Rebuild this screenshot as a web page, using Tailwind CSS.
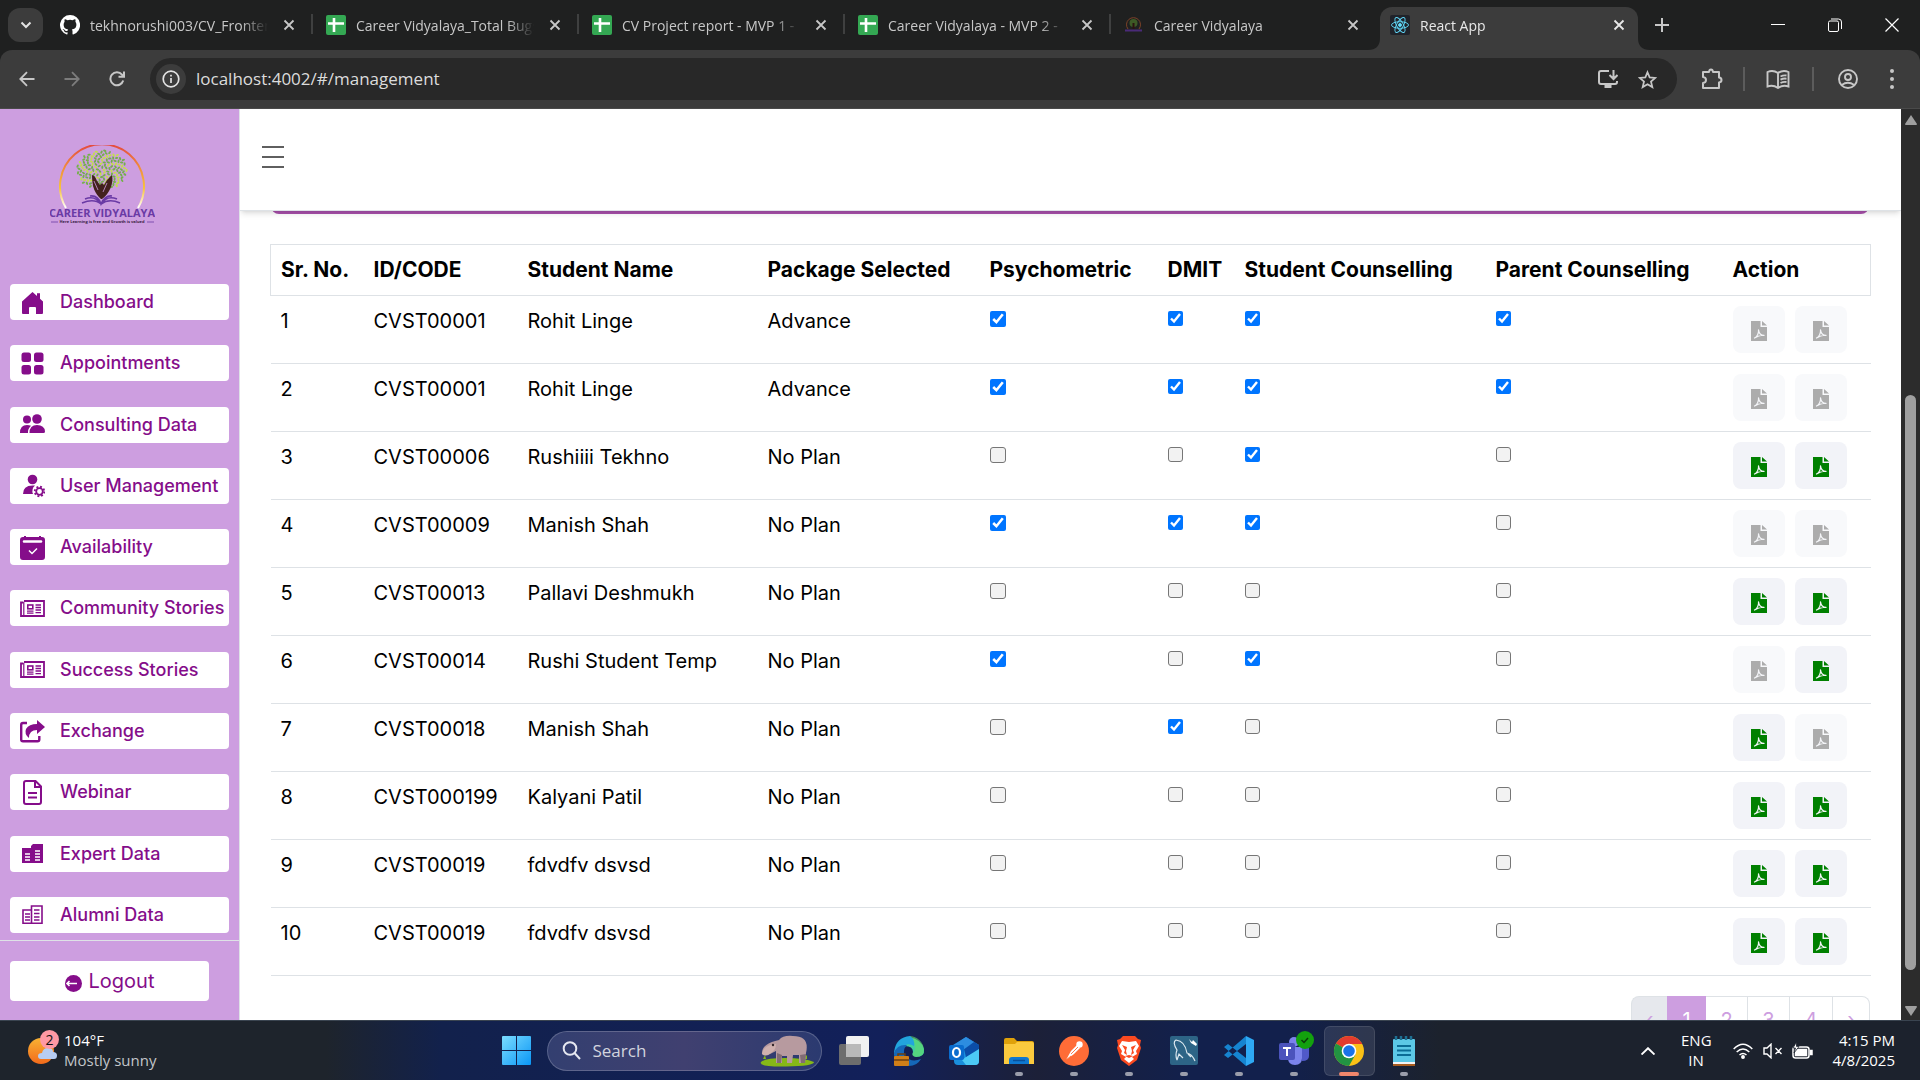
<!DOCTYPE html>
<html lang="en">
<head>
<meta charset="utf-8">
<meta name="viewport" content="width=device-width, initial-scale=1">
<title>React App</title>
<script src="https://cdn.jsdelivr.net/npm/@tailwindcss/browser@4"></script>
</head>
<body class="h-screen overflow-hidden bg-[#202020] font-['Inter',sans-serif]">

<!-- Shared icon shapes -->
<svg class="hidden" aria-hidden="true">
  <symbol id="x" viewBox="0 0 12 12"><path d="M1.500 1.500l9 9M10.500 1.500l-9 9" stroke="currentColor" stroke-width="1.800" fill="none"/></symbol>
  <symbol id="sheet" viewBox="0 0 20 20"><rect width="20" height="20" rx="2" fill="#34a853"/><path d="M8 3v14M2 8.500h16" stroke="#fff" stroke-width="2.600"/></symbol>
  <symbol id="pdf" viewBox="0 0 16 20"><path fill="currentColor" d="M0 0h9.500v6H16v14H0zM11 0l5 4.500h-5z"/><path d="M3.500 17c2.500-1.200 4.500-5 4-8.200 .5 3.600 2.500 5.600 5.500 5.600-3-.7-5.500.2-9.500 2.600" stroke="#f4f5f8" stroke-width="1.200" fill="none" stroke-linejoin="round" stroke-linecap="round"/></symbol>
  <symbol id="news" viewBox="0 0 25 25"><path d="M4 5h20v15H1V6.500h2.500" fill="none" stroke="currentColor" stroke-width="1.800"/><path d="M3.800 6v13" stroke="currentColor" stroke-width="1.200"/><rect x="7.800" y="9" width="5" height="3.800" fill="none" stroke="currentColor" stroke-width="1.600"/><path d="M7 15.200h6.500M7 17.200h6.500M15.500 9h5.500M15.500 11.500h5.500M15.500 14h5.500M15.500 16.700h5.500" stroke="currentColor" stroke-width="1.300"/></symbol>
</svg>

<div class="flex h-full flex-col">
  <!-- Browser tab strip -->
  <header class="shrink-0 font-['Open_Sans',sans-serif] text-[#c7c7c7]">
    <div class="flex h-[50px] items-stretch bg-[#1f2020]">
      <button aria-label="Search tabs" class="ml-2 mt-2 grid h-[34px] w-[35px] shrink-0 place-items-center rounded-xl bg-[#3c3c3c]"><svg class="size-3" viewBox="0 0 12 12"><path d="M1.500 3.500L6 8l4.500-4.500" stroke="#e3e3e3" stroke-width="2" fill="none"/></svg></button>
      <nav id="tabs" class="ml-[7px] flex shrink-0 pt-[7px] text-[14px]"></nav>
      <button aria-label="New tab" class="ml-2 grid w-4 place-items-center pb-1 pt-1"><svg class="size-[14px]" viewBox="0 0 14 14"><path d="M7 0v14M0 7h14" stroke="#c7c7c7" stroke-width="2"/></svg></button>
      <div class="ml-auto flex items-center text-white">
        <button aria-label="Minimize" class="grid w-[57px] place-items-center"><svg class="size-[14px]" viewBox="0 0 14 14"><path d="M0 6.500h14" stroke="currentColor"/></svg></button>
        <button aria-label="Restore" class="grid w-[57px] place-items-center"><svg class="size-[14px]" viewBox="0 0 14 14" fill="none" stroke="currentColor"><rect x=".5" y="3" width="10" height="10.500" rx="1.500"/><path d="M3 1h7.500a3 3 0 0 1 3 3v7"/></svg></button>
        <button aria-label="Close" class="grid w-[57px] place-items-center"><svg class="size-[14px]" viewBox="0 0 14 14"><path d="M.5.5l13 13M13.500.5l-13 13" stroke="currentColor" stroke-width="1.200"/></svg></button>
      </div>
    </div>
    <!-- Address bar row -->
    <div class="bg-[#1f2020]">
    <div class="flex h-[59px] items-center rounded-t-xl border-b border-[#4a4a4a] bg-[#3c3c3c] pr-4">
      <button aria-label="Back" class="ml-[15px] grid w-6 place-items-center"><svg class="size-4" viewBox="0 0 16 16" fill="none" stroke="#c7c7c7" stroke-width="1.800"><path d="M15.500 8H1.500M8 1.200L1.300 8 8 14.800"/></svg></button>
      <button aria-label="Forward" class="ml-[21px] grid w-6 place-items-center"><svg class="size-4" viewBox="0 0 16 16" fill="none" stroke="#7c7c7c" stroke-width="1.800"><path d="M.5 8h14M8 1.200L14.700 8 8 14.800"/></svg></button>
      <button aria-label="Reload" class="ml-[21px] grid w-6 place-items-center"><svg class="size-4" viewBox="0 0 16 16" fill="none" stroke="#c7c7c7" stroke-width="2"><path d="M14.200 9.500A6.500 6.500 0 1 1 13 3.700L14.500 5.500M15 .5v5.300H9.500"/></svg></button>
      <div class="ml-[21px] flex h-[42px] flex-1 items-center rounded-full bg-[#282828] pl-[6px] pr-5">
        <span class="grid size-[30px] place-items-center rounded-full bg-[#3c3c3c]"><svg class="size-[18px]" viewBox="0 0 18 18" fill="none" stroke="#e3e3e3" stroke-width="1.700"><circle cx="9" cy="9" r="7.800"/><path d="M9 8v5M9 4.800v1.700"/></svg></span>
        <input aria-label="Address" value="localhost:4002/#/management" class="ml-[10px] min-w-0 flex-1 bg-transparent text-[17px] text-[#dcdcdc] outline-none">
        <svg class="h-[18px] w-5" viewBox="0 0 20 18" fill="none" stroke="#c7c7c7" stroke-width="2"><path d="M11 1H3Q1 1 1 3v9q0 2 2 2h14q2 0 2-2v-1M15.500 0v8M11.500 5l4 4 4-4"/><path d="M6.500 16.500h7" stroke-width="3"/></svg>
        <svg class="ml-5 size-[19px]" viewBox="0 0 24 24" fill="none" stroke="#c7c7c7" stroke-width="2.200"><path d="M12 2.800l2.700 6.600 7.100.6-5.400 4.600 1.700 7L12 17.900l-6.100 3.700 1.700-7L2.200 10l7.100-.6z"/></svg>
      </div>
      <svg class="ml-6 size-[22px]" viewBox="0 0 22 22" fill="none" stroke="#c7c7c7" stroke-width="2"><path d="M2 4h6q.3-2.500 2-2.500T12 4h6v5.500q2.500.3 2.500 2.500T18 14.500V20H2v-5q3-.3 3-3T2 9z" stroke-linejoin="round"/></svg>
      <span class="ml-5 h-6 w-[2px] bg-[#5c5c5c]"></span>
      <svg class="ml-[21px] h-5 w-6" viewBox="0 0 24 20" fill="none" stroke="#c7c7c7" stroke-width="1.900"><path d="M12 4v15M12 4Q7 .5 1.500 3v14.500Q7 15.500 12 19q5-3.500 10.500-1.500V3Q17 .5 12 4z"/><path d="M14.500 7.500q3-1.500 6-1M14.500 10.700q3-1.500 6-1M14.500 14q3-1.500 6-1"/></svg>
      <span class="ml-[22px] h-6 w-[2px] bg-[#5c5c5c]"></span>
      <svg class="ml-6 size-5" viewBox="0 0 20 20" fill="none" stroke="#c7c7c7" stroke-width="1.900"><circle cx="10" cy="10" r="9"/><circle cx="10" cy="8" r="3"/><path d="M3.800 16q6-4.500 12.400 0"/></svg>
      <button aria-label="Menu" class="ml-[22px] grid w-6 place-items-center"><svg class="h-5 w-1" viewBox="0 0 4 20" fill="#c7c7c7"><circle cx="2" cy="2" r="2"/><circle cx="2" cy="10" r="2"/><circle cx="2" cy="18" r="2"/></svg></button>
    </div>
    </div>
  </header>

  <!-- Page -->
  <div class="flex min-h-0 flex-1 bg-white">
    <aside class="flex w-60 shrink-0 flex-col border-r border-[#dee2e6] bg-[#cd9ee0]">
      <svg class="ml-[50px] mt-9 h-20 w-[105px] shrink-0" viewBox="0 0 105 80">
        <defs><linearGradient id="ring" x1="0" y1="0" x2="0" y2="1"><stop offset="0" stop-color="#e4483f"/><stop offset=".35" stop-color="#f08a3c"/><stop offset=".7" stop-color="#f7c63c"/><stop offset="1" stop-color="#fff"/></linearGradient></defs>
        <path d="M16 63A42 42 0 1 1 88 63" fill="none" stroke="url(#ring)" stroke-width="2"/>
        <g id="leaves"></g>
        <path d="M51 54c-6-5-9-12-9-24 2 0 4 3 5 6l3 4 2-2 2 2 3-5 5-5c2 9-3 19-10 24z" fill="#43211e"/>
        <path d="M44 36l4 9M57 38l-4 9" stroke="#cd9ee0" stroke-width=".8"/>
        <path d="M32 58q12-5 19 1 8-6 19-1M35 54q10-4 16 5 6-9 16-5M40 51q8-1 11 8 4-9 11-8" fill="none" stroke="#6a3aa5" stroke-width="1.600"/>
        <text x="52" y="72" text-anchor="middle" font-family="Open Sans, sans-serif" font-weight="700" font-size="11" fill="#6a3aa5">CAREER VIDYALAYA</text>
        <text x="52" y="78" text-anchor="middle" font-family="Open Sans, sans-serif" font-weight="700" font-size="4" fill="#3a2144">Here Learning is free and Growth is valued</text>
        <path d="M1 77h7M97 77h7" stroke="#6a3aa5" stroke-width=".8"/>
      </svg>
      <nav class="mt-[59px] flex min-h-0 flex-1 flex-col justify-between px-[10px] pb-[7px] text-[18px] font-medium leading-9 text-[#850d8a]">
        <a href="#" class="flex h-9 items-center gap-[15px] whitespace-nowrap rounded bg-white pl-[10px]"><svg class="size-[25px] shrink-0" viewBox="0 0 25 25" fill="currentColor"><path d="M2 11.500L12.500 2l4.500 4V3.200h3v5.500l3 2.800V23q0 1-1 1h-6v-6q0-1-1-1h-5q-1 0-1 1v6H3q-1 0-1-1z"/></svg>Dashboard</a>
        <a href="#" class="flex h-9 items-center gap-[15px] whitespace-nowrap rounded bg-white pl-[10px]"><svg class="size-[25px] shrink-0" viewBox="0 0 25 25" fill="currentColor"><rect x="1.500" y="1.500" width="9.500" height="9.500" rx="2.500"/><rect x="14" y="1.500" width="9.500" height="9.500" rx="2.500"/><rect x="1.500" y="14" width="9.500" height="9.500" rx="2.500"/><rect x="14" y="14" width="9.500" height="9.500" rx="2.500"/></svg>Appointments</a>
        <a href="#" class="flex h-9 items-center gap-[15px] whitespace-nowrap rounded bg-white pl-[10px]"><svg class="size-[25px] shrink-0" viewBox="0 0 25 25" fill="currentColor"><circle cx="7" cy="7.500" r="4"/><circle cx="17" cy="7" r="4.800"/><path d="M9.500 21q0-8 7.500-8t8 6.500q0 1.500-1.500 1.500zM8 21H0q0-8 7-8 2 0 4 .8Q7.500 17 8 21z"/></svg>Consulting Data</a>
        <a href="#" class="flex h-9 items-center gap-[15px] whitespace-nowrap rounded bg-white pl-[10px]"><svg class="size-[25px] shrink-0" viewBox="0 0 25 25" fill="currentColor"><circle cx="12.500" cy="6.500" r="4.800"/><path d="M3 21q0-8.500 9.500-8.500h2.500Q11 16 13 21z"/><circle cx="19.500" cy="18.500" r="3.300" fill="none" stroke="currentColor" stroke-width="1.800"/><circle cx="19.500" cy="18.500" r="4.800" fill="none" stroke="currentColor" stroke-width="1.800" stroke-dasharray="1.900 1.870"/></svg>User Management</a>
        <a href="#" class="flex h-9 items-center gap-[15px] whitespace-nowrap rounded bg-white pl-[10px]"><svg class="size-[25px] shrink-0" viewBox="0 0 25 25" fill="currentColor"><path d="M4 1h2v1h13V1h2v1h1q3 0 3 3v17q0 3-3 3H3q-3 0-3-3V5q0-3 3-3h1z"/><path d="M4 6.500h17" stroke="#fff" stroke-width="2.500" stroke-linecap="round"/><path d="M9 15.500l3 3 5-5" fill="none" stroke="#fff" stroke-width="1.500"/></svg>Availability</a>
        <a href="#" class="flex h-9 items-center gap-[15px] whitespace-nowrap rounded bg-white pl-[10px]"><svg class="size-[25px] shrink-0"><use href="#news"/></svg>Community Stories</a>
        <a href="#" class="flex h-9 items-center gap-[15px] whitespace-nowrap rounded bg-white pl-[10px]"><svg class="size-[25px] shrink-0"><use href="#news"/></svg>Success Stories</a>
        <a href="#" class="flex h-9 items-center gap-[15px] whitespace-nowrap rounded bg-white pl-[10px]"><svg class="size-[25px] shrink-0" viewBox="0 0 25 25" fill="currentColor"><path d="M7 4H3Q1.200 4 1.200 6v14.500q0 1.800 1.800 1.800h14.500q1.800 0 1.800-1.800V17" fill="none" stroke="currentColor" stroke-width="2.400"/><path d="M17 1l8 7-8 7v-4Q9 11 9 19 4 15 6 10q3-5 11-5z"/></svg>Exchange</a>
        <a href="#" class="flex h-9 items-center gap-[15px] whitespace-nowrap rounded bg-white pl-[10px]"><svg class="size-[25px] shrink-0" viewBox="0 0 25 25" fill="none" stroke="currentColor" stroke-width="2"><path d="M4 3q0-2 2-2h9.500L21 6.500V22q0 2-2 2H6q-2 0-2-2z"/><path d="M15 1.500V7h5.500M8 13h9M8 17.500h9"/></svg>Webinar</a>
        <a href="#" class="flex h-9 items-center gap-[15px] whitespace-nowrap rounded bg-white pl-[10px]"><svg class="size-[25px] shrink-0" viewBox="0 0 25 25" fill="currentColor"><path d="M2 7h9V5l2-2h10v19H2z"/><path d="M5 13h5M5 16h5M5 19h5M15 10h5M15 13h5M15 16h5M15 19h5" stroke="#fff" stroke-width="1.300"/></svg>Expert Data</a>
        <a href="#" class="flex h-9 items-center gap-[15px] whitespace-nowrap rounded bg-white pl-[10px]"><svg class="size-[25px] shrink-0" viewBox="0 0 25 25" fill="none" stroke="currentColor" stroke-width="1.600"><path d="M11.500 21.200H3V8h8.500zV4h10.500v17.200H11.500z"/><path d="M5 12h5M5 15h5M5 18h5M14 8h5.500M14 11.500h5.500M14 15h5.500M14 18h5.500" stroke-width="1.300"/></svg>Alumni Data</a>
      </nav>
      <div class="border-t border-[#dee2e6] pb-[19px] pl-[10px] pr-[30px] pt-5">
        <button class="flex h-10 w-full items-center justify-center gap-[7px] rounded bg-white text-[20px] text-[#850d8a]"><svg class="mt-1 size-[17px]" viewBox="0 0 17 17"><circle cx="8.500" cy="8.500" r="8.500" fill="currentColor"/><path d="M12 8.500H2M4.500 6L2 8.500 4.500 11" stroke="#fff" stroke-width="1.600" fill="none"/></svg>Logout</button>
      </div>
    </aside>

    <main class="flex min-w-0 flex-1 flex-col overflow-hidden">
      <div class="z-10 flex h-[102px] shrink-0 items-center border-b border-[#dee2e6] bg-white pl-[22px] shadow-md shadow-black/10">
        <button aria-label="Toggle sidebar" class="flex flex-col gap-2 pb-[6px]"><span class="h-[2px] w-[22px] bg-[#5f5f5f]"></span><span class="h-[2px] w-[22px] bg-[#5f5f5f]"></span><span class="h-[2px] w-[22px] bg-[#5f5f5f]"></span></button>
      </div>
      <div class="min-h-0 flex-1 overflow-hidden pl-[30px] pr-[31px]">
        <div class="-mt-[9px] ml-[1px] mr-[1px] h-3 rounded-b-lg bg-[#a850ac]"></div>
        <table class="mt-[30px] w-full table-fixed border-collapse text-left text-[20px] leading-[30px] text-black">
          <colgroup><col class="w-[93px]"><col class="w-[154px]"><col class="w-[240px]"><col class="w-[222px]"><col class="w-[178px]"><col class="w-[77px]"><col class="w-[251px]"><col class="w-[237px]"><col class="w-[148px]"></colgroup>
          <thead class="border border-[#dee2e6] text-[21px]">
            <tr class="h-[51px] whitespace-nowrap"><th class="px-[10px] font-bold">Sr. No.</th><th class="px-[10px] font-bold">ID/CODE</th><th class="px-[10px] font-bold">Student Name</th><th class="px-[10px] font-bold">Package Selected</th><th class="px-[10px] font-bold">Psychometric</th><th class="px-[10px] font-bold">DMIT</th><th class="px-[10px] font-bold">Student Counselling</th><th class="px-[10px] font-bold">Parent Counselling</th><th class="px-[10px] font-bold">Action</th></tr>
          </thead>
          <tbody id="rows"></tbody>
        </table>
        <nav aria-label="Pages" class="mt-5 flex justify-end text-[20px] leading-[30px] text-[#cd9ee0]">
          <a href="#" class="flex h-12 w-[36px] items-center justify-center rounded-l-lg border border-r-0 border-[#dee2e6] bg-[#e6e8ed]">‹</a>
          <a href="#" class="flex h-12 w-[39px] items-center justify-center bg-[#cd9ee0] text-white">1</a>
          <a href="#" class="flex h-12 w-[42px] items-center justify-center border-y border-r border-[#dee2e6]">2</a>
          <a href="#" class="flex h-12 w-[42px] items-center justify-center border-y border-r border-[#dee2e6]">3</a>
          <a href="#" class="flex h-12 w-[43px] items-center justify-center border-y border-r border-[#dee2e6]">4</a>
          <a href="#" class="flex h-12 w-[37px] items-center justify-center rounded-r-lg border border-l-0 border-[#dee2e6]">›</a>
        </nav>
      </div>
    </main>

    <!-- Scrollbar -->
    <div class="flex w-[19px] shrink-0 flex-col items-center bg-[#2c2c2c] pb-[4px] pt-[6px]" aria-hidden="true">
      <svg class="h-[10px] w-3" viewBox="0 0 12 10"><path d="M6 0l6 9q0 1-1 1H1q-1 0-1-1z" fill="#9f9f9f"/></svg>
      <div class="flex w-full flex-1 flex-col items-center">
        <span class="grow-[270]"></span><span class="w-[11px] grow-[576] rounded-full bg-[#9f9f9f]"></span><span class="grow-[36]"></span>
      </div>
      <svg class="h-[10px] w-3" viewBox="0 0 12 10"><path d="M6 10L0 1q0-1 1-1h10q1 0 1 1z" fill="#9f9f9f"/></svg>
    </div>
  </div>

  <!-- Taskbar -->
  <footer class="grid h-[60px] shrink-0 grid-cols-[1fr_auto_1fr] items-center border-t border-[#3a4450] bg-[linear-gradient(to_right,#1e242c_17%,#12214c_23%,#12205a_46%,#1c2038_54%,#12204c_62%,#12204c_67%,#1c222d_75%)] font-['Open_Sans',sans-serif] text-[15px] leading-[20px] text-white">
    <div class="flex items-center pb-[2px] pl-[27px]">
      <svg class="h-10 w-8" viewBox="0 0 32 40"><defs><linearGradient id="sun" x1="0" y1="0" x2="0" y2="1"><stop offset="0" stop-color="#f9b233"/><stop offset="1" stop-color="#f26a1b"/></linearGradient></defs><circle cx="14" cy="21" r="13" fill="url(#sun)"/><path d="M14 29q-3 0-3-3t4-3q1-5 6-5t5 4q4 0 4 3.500T27 29z" fill="#b7cdf3"/><circle cx="22.500" cy="9.500" r="9.500" fill="#ff99a4"/><text x="22.500" y="14.500" font-size="14" text-anchor="middle" fill="#111">2</text></svg>
      <p class="ml-[5px]">104°F<br><span class="text-[#c3c6ca]">Mostly sunny</span></p>
    </div>
    <div class="flex items-center">
      <button aria-label="Start" class="grid w-[55px] place-items-center"><svg class="size-[29px]" viewBox="0 0 29 29"><defs><linearGradient id="win" x1="0" y1="0" x2="1" y2="1"><stop offset="0" stop-color="#7bdcff"/><stop offset="1" stop-color="#0a96f5"/></linearGradient></defs><path d="M1 0h13v14H0V1q0-1 1-1zM15 0h13q1 0 1 1v13H15zM0 15h14v14H1q-1 0-1-1zM15 15h14v13q0 1-1 1H15z" fill="url(#win)"/></svg></button>
      <label class="ml-[3px] mr-[5px] flex h-10 w-[275px] items-center rounded-full border border-white/20 bg-linear-to-r from-[#333f70] via-[#404070] to-[#2b3a70] pl-[14px] pr-[6px]">
        <svg class="size-[19px]" viewBox="0 0 19 19" fill="none" stroke="#e6e8f0" stroke-width="2"><circle cx="8" cy="7.500" r="6.300"/><path d="M12.500 12l5.500 6"/></svg>
        <input aria-label="Search" placeholder="Search" class="ml-3 w-[120px] min-w-0 flex-1 bg-transparent text-[17px] outline-none placeholder:text-[#d2d4de]">
        <svg class="h-8 w-14 shrink-0" viewBox="0 0 56 32"><path d="M2 27q4-4 24-4t29 4q0 4-28 4.500T2 27z" fill="#86b817"/><path d="M4 24l2-4 1 4M44 24l4-4v4" fill="#86b817"/><path d="M17 16v12h6v-7h5v7h5l1-8h6v8h6l1-10q4-17-13-17-10-1-14 4Q2 9 3 19q3 3 8 0z" fill="#b79a9f"/><path d="M17 9Q4 10 3 19q4 3 9-1 5-3 5-9z" fill="#d0b1af"/><path d="M18 18v10h4l1-8zM41 20l1 8h4l1-9z" fill="#826c75"/><circle cx="14" cy="10" r="1.200" fill="#33272c"/></svg>
      </label>
      <div id="apps" class="flex"></div>
    </div>
    <div class="flex items-center justify-end pr-[25px]">
      <svg class="h-2 w-[14px]" viewBox="0 0 14 8" fill="none" stroke="#fff" stroke-width="1.900"><path d="M.5 7.500L7 1.200l6.500 6.300"/></svg>
      <p class="ml-[26px] w-[30px] pb-px text-center">ENG<br>IN</p>
      <svg class="ml-[22px] h-4 w-5" viewBox="0 0 20 16" fill="none" stroke="#fff" stroke-width="1.500"><path d="M.7 6q9.300-9.500 18.600 0M3.700 9q6.300-6 12.600 0M6.500 12q3.500-3 7 0"/><circle cx="10" cy="14" r="1.200" fill="#fff"/></svg>
      <svg class="ml-[10px] h-4 w-5" viewBox="0 0 20 16" fill="none" stroke="#fff" stroke-width="1.400"><path d="M1 5h3l4-3.800v13.600L4 11H1zM12.500 5l6 6M18.500 5l-6 6"/></svg>
      <svg class="ml-[9px] h-[18px] w-[21px]" viewBox="0 0 21 18" fill="none" stroke="#fff" stroke-width="1.500"><rect x="1" y="5" width="16" height="11" rx="2.500"/><rect x="3.500" y="7.500" width="11" height="6" fill="#fff"/><path d="M18.500 8.500h1.500v4h-1.500z" fill="#fff"/><path d="M4.500 0L1 6h2.500L2 11l5-6.500H4.500z" fill="#fff" stroke="#1c222d" stroke-width=".8"/></svg>
      <p class="ml-[10px] w-[72px] whitespace-nowrap pb-[2px] text-right"><span class="block">4:15 PM</span><span class="block">4/8/2025</span></p>
    </div>
  </footer>
</div>

<script>
  // Tree crown of the logo
  let leaves = '';
  for (let i = 0; i < 150; i++) {
    const r = 25 * Math.sqrt((i + 1) / 150), a = i * 2.4;
    const x = 52 + r * Math.cos(a), y = 25 + r * .78 * Math.sin(a);
    leaves += `<ellipse cx="${x.toFixed(1)}" cy="${y.toFixed(1)}" rx="1.700" ry="1" fill="${i % 3 ? '#74b04a' : '#c3e04a'}" transform="rotate(${(i * 47) % 180} ${x.toFixed(1)} ${y.toFixed(1)})"/>`;
  }
  document.getElementById('leaves').innerHTML = leaves;

  // Browser tabs
  const gh = '<svg class="size-5 shrink-0" viewBox="0 0 16 16" fill="#fff"><path d="M8 0a8 8 0 0 0-2.530 15.590c.4.070.55-.17.55-.38v-1.330C3.800 14.360 3.330 12.800 3.330 12.800c-.36-.92-.89-1.170-.89-1.170-.73-.5.05-.49.05-.49.8.060 1.230.83 1.230.83.71 1.220 1.870.87 2.330.66.070-.52.280-.87.5-1.070-1.770-.2-3.640-.89-3.640-3.950 0-.87.310-1.590.82-2.150-.080-.2-.36-1.020.080-2.120 0 0 .67-.21 2.200.82a7.600 7.600 0 0 1 4 0c1.530-1.040 2.200-.82 2.200-.82.440 1.100.160 1.920.080 2.120.510.56.82 1.270.82 2.150 0 3.070-1.870 3.750-3.650 3.950.290.250.540.730.540 1.480v2.190c0 .21.150.46.550.38A8 8 0 0 0 8 0z"/></svg>';
  const sheet = '<svg class="size-5 shrink-0"><use href="#sheet"/></svg>';
  const cv = '<svg class="size-5 shrink-0" viewBox="0 0 20 20" fill="none"><path d="M4 14A7 7 0 1 1 15 14" stroke="#7c4228"/><circle cx="9.500" cy="8" r="4" fill="#3d5a26"/><path d="M9.500 8v6" stroke="#2c120f" stroke-width="2"/><path d="M1 15.500h17" stroke="#4a2a78" stroke-width="2"/></svg>';
  const react = '<svg class="size-5 shrink-0" viewBox="0 0 20 20" fill="none" stroke="#61dafb" stroke-width=".9"><rect width="20" height="20" rx="2" fill="#20232a" stroke="none"/><ellipse cx="10" cy="10" rx="8.500" ry="3.300"/><ellipse cx="10" cy="10" rx="8.500" ry="3.300" transform="rotate(60 10 10)"/><ellipse cx="10" cy="10" rx="8.500" ry="3.300" transform="rotate(120 10 10)"/><circle cx="10" cy="10" r="1.500" fill="#61dafb"/></svg>';
  const tabs = [[gh, 'tekhnorushi003/CV_Frontend'], [sheet, 'Career Vidyalaya_Total Bugs'], [sheet, 'CV Project report - MVP 1 -'], [sheet, 'Career Vidyalaya - MVP 2 -'], [cv, 'Career Vidyalaya'], [react, 'React App']];
  document.getElementById('tabs').innerHTML = tabs.map(([icon, name], i) => {
    const active = i === 5;
    return `<div class="relative flex w-[258px] items-center pb-[9px] pl-[10px] pt-[2px] mr-2 ${active ? 'rounded-t-xl bg-[#3c3c3c] text-[#e8e8e8]' : ''}">
      ${icon}<span class="ml-[10px] w-[178px] overflow-hidden whitespace-nowrap mask-r-from-85% mask-r-to-100%">${name}</span>
      <button aria-label="Close tab" class="ml-[15px] grid w-3 place-items-center ${active ? 'text-[#e8e8e8]' : ''}"><svg class="size-3"><use href="#x"/></svg></button>
      ${active ? '<svg class="absolute -left-3 bottom-0 size-3" viewBox="0 0 12 12"><path d="M12 0v12H0Q12 12 12 0z" fill="#3c3c3c"/></svg><svg class="absolute -right-3 bottom-0 size-3" viewBox="0 0 12 12"><path d="M0 0v12h12Q0 12 0 0z" fill="#3c3c3c"/></svg>' : i < 4 ? '<span class="absolute -right-[5px] top-[7px] h-5 w-[2px] bg-[#3f4040]"></span>' : ''}
    </div>`;
  }).join('');

  // Student rows: id, name, package, ticked services, finished reports
  const data = [
    ['CVST00001', 'Rohit Linge', 'Advance', '1111', '00'], ['CVST00001', 'Rohit Linge', 'Advance', '1111', '00'],
    ['CVST00006', 'Rushiiii Tekhno', 'No Plan', '0010', '11'], ['CVST00009', 'Manish Shah', 'No Plan', '1110', '00'],
    ['CVST00013', 'Pallavi Deshmukh', 'No Plan', '0000', '11'], ['CVST00014', 'Rushi Student Temp', 'No Plan', '1010', '01'],
    ['CVST00018', 'Manish Shah', 'No Plan', '0100', '10'], ['CVST000199', 'Kalyani Patil', 'No Plan', '0000', '11'],
    ['CVST00019', 'fdvdfv dsvsd', 'No Plan', '0000', '11'], ['CVST00019', 'fdvdfv dsvsd', 'No Plan', '0000', '11']];
  const services = ['Psychometric', 'DMIT', 'Student Counselling', 'Parent Counselling'];
  document.getElementById('rows').innerHTML = data.map((r, i) => `<tr class="h-[68px] whitespace-nowrap border-b border-[#dee2e6] align-top">
    ${[i + 1, r[0], r[1], r[2]].map(t => `<td class="px-[10px] pt-[10px]">${t}</td>`).join('')}
    ${[...r[3]].map((c, k) => `<td class="px-[10px] pt-[15px]"><input type="checkbox" aria-label="${services[k]}" ${c === '1' ? 'checked' : ''} class="block ${k ? 'size-[15px]' : 'size-4'} rounded-[3px] border-[#767676] not-checked:appearance-none not-checked:border not-checked:bg-[#f2f2f2]"></td>`).join('')}
    <td class="px-[10px] pt-[10px]"><div class="flex gap-[10px]">${[...r[4]].map(c => `<button aria-label="PDF report" class="grid h-[47px] w-[52px] place-items-center rounded-lg pt-[2px] ${c === '1' ? 'bg-[#f2f3f8] text-[#008000]' : 'bg-[#f8f9fb] text-[#acacac]'}"><svg class="h-5 w-4"><use href="#pdf"/></svg></button>`).join('')}</div></td></tr>`).join('');

  // Taskbar applications
  const apps = [
    ['Task view', 0, '<rect y="8" x="0" width="22" height="21" rx="2" fill="#6d6d6d"/><rect x="7" y="0" width="23" height="21" rx="2" fill="#f1f1f1"/><path d="M7 8h15v13H7z" fill="#b9b9b9"/>'],
    ['Edge', 0, '<path d="M1 13A15 15 0 0 1 30 13q1 8-8 8-5-1-3-5 0-6-8-6-6 0-10 3z" fill="#3fd0a0"/><path d="M15 0A15 15 0 0 1 30 14q0 7-8 7-5-1-3-4 6-8-4-17z" fill="#63d96b" opacity=".6"/><path d="M0 16Q2 1 16 0q5 3 4 10-6-4-12 1-5 3-8 9z" fill="#22a5dd"/><path d="M0 17Q3 8 13 9q-5 5-2 11 6 7 16 3-4 7-12 7Q0 29 0 17z" fill="#1567b8"/><rect y="20" width="15" height="10" rx="1" fill="#d07f18"/><path d="M4 20v-2h7v2M0 24h15" stroke="#6e3f0e" fill="none" stroke-width="1.500"/>'],
    ['Outlook', 0, '<path d="M4 9L17 1l13 8v16q0 4-4 4H9q-4 0-4-4z" fill="#1a8fdc"/><path d="M30 11L13 24l4 5h9q4 0 4-4z" fill="#4cc9f5"/><path d="M17 1l13 8v4L17 21l-3-12z" fill="#0b4da8"/><path d="M17 1l8 5-11 8-9-5z" fill="#2d8de0"/><rect x="0" y="9" width="15" height="15" rx="2" fill="#0a6cce"/><ellipse cx="7.500" cy="16.500" rx="3.500" ry="4.500" fill="none" stroke="#fff" stroke-width="2.200"/>'],
    ['File Explorer', 8, '<path d="M0 4q0-2 2-2h8l3 3h15q2 0 2 2v6H0z" fill="#dfa10a"/><path d="M0 8h11l2-2h15q2 0 2 2v20H0z" fill="#fbca3e"/><path d="M5 28v-4q0-3 3-3h14q3 0 3 3v4z" fill="#0f78d0"/><path d="M9 24.500h12" stroke="#08509b" stroke-width="1.500"/>'],
    ['Postman', 8, '<circle cx="15" cy="15" r="15" fill="#ff6c37"/><path d="M7 24l5-9 6-6 3 3-6 6z" fill="#fff"/><circle cx="20.500" cy="8.500" r="3.200" fill="#fff"/><path d="M12 18l7-7M7 24l5-4" stroke="#ff6c37" stroke-width=".9"/>'],
    ['Brave', 8, '<path d="M9 0h12l3 3 3 1-1 5 1 3-4 12-8 6-8-6L3 12l1-3-1-5 3-1z" fill="#fb4a20"/><path d="M8 5l7 1 7-1 3 5-3 5 1 3-5 3 2 2-5 4-5-4 2-2-5-3 1-3-3-5z" fill="#fff"/><path d="M8 9l5 2-1 4 1 4-3-2 1-3zM22 9l-5 2 1 4-1 4 3-2-1-3zM11 20l4-1 4 1-4 2z" fill="#fb4a20"/>'],
    ['MySQL Workbench', 8, '<rect x="1" y="0" width="28" height="29" rx="2" fill="#2d6486"/><path d="M8 24q-2-5 0-10Q3 6 7 4q9 1 11 13 5 1 8 8M8 24l2-6 4 4M19 18l3 3" fill="none" stroke="#dce8ef" stroke-width="1.200"/><path d="M20 3l2 4 5 3 1-2-4-4-1 2z" fill="#fff"/>'],
    ['Visual Studio Code', 8, '<path d="M22 0l8 4v22l-8 4z" fill="#2ea9f4"/><path d="M22 0v8L4 22l-4-3zM22 30v-8L4 8l-4 3z" fill="#1684d0"/>'],
    ['Teams', 8, '<circle cx="15" cy="6" r="5" fill="#7b83eb"/><path d="M20 11h10v9q0 5-7 5z" fill="#5059c9"/><path d="M9 11h14v11q0 7-7 7t-7-7z" fill="#7b83eb"/><rect y="7" width="16" height="17" rx="2" fill="#4b53bc"/><path d="M4 12h8M8 12v8" stroke="#fff" stroke-width="2"/><circle cx="26" cy="4" r="9" fill="#13a10e"/><path d="M22.500 4l2.500 2.500 4-4.500" stroke="#0a3a0a" stroke-width="1.500" fill="none"/>'],
    ['Chrome', 20, '<circle cx="15" cy="15" r="15" fill="#fbc116"/><path d="M15 15L2 7.500A15 15 0 0 1 28 7.500H15z" fill="#e33b2e"/><path d="M2 7.500A15 15 0 0 0 15 30l6.500-11.500L15 15z" fill="#229342"/><path d="M15 7.500h13" stroke="#e33b2e"/><circle cx="15" cy="15" r="7.300" fill="#fff"/><circle cx="15" cy="15" r="5.800" fill="#1a73e8"/>'],
    ['Notepad', 8, '<rect x="4" y="3" width="22" height="26" rx="1" fill="#5cc8e6"/><path d="M4 26h22v3H4z" fill="#f3f3f3"/><path d="M4 29h22" stroke="#a85c1f" stroke-width="2"/><path d="M8 10h14M8 14.500h14M8 19h14" stroke="#0b6c95" stroke-width="2"/><path d="M7 0v4M12 0v4M17 0v4M22 0v4" stroke="#1d6f92" stroke-width="2.500"/>']];
  document.getElementById('apps').innerHTML = apps.map(([name, mark, art]) => `<button aria-label="${name}" class="relative grid h-[50px] w-[55px] place-items-center">
    ${mark === 20 ? '<span class="absolute inset-x-[2px] inset-y-0 rounded-md border border-white/10 bg-white/10"></span>' : ''}
    <svg class="relative size-[30px] overflow-visible" viewBox="0 0 30 30">${art}</svg>
    ${mark === 20 ? '<span class="absolute bottom-0 h-1 w-5 rounded-full bg-[#f0866c]"></span>' : mark ? '<span class="absolute bottom-0 h-1 w-2 rounded-full bg-[#9a9dab]"></span>' : ''}
  </button>`).join('');
</script>
</body>
</html>
